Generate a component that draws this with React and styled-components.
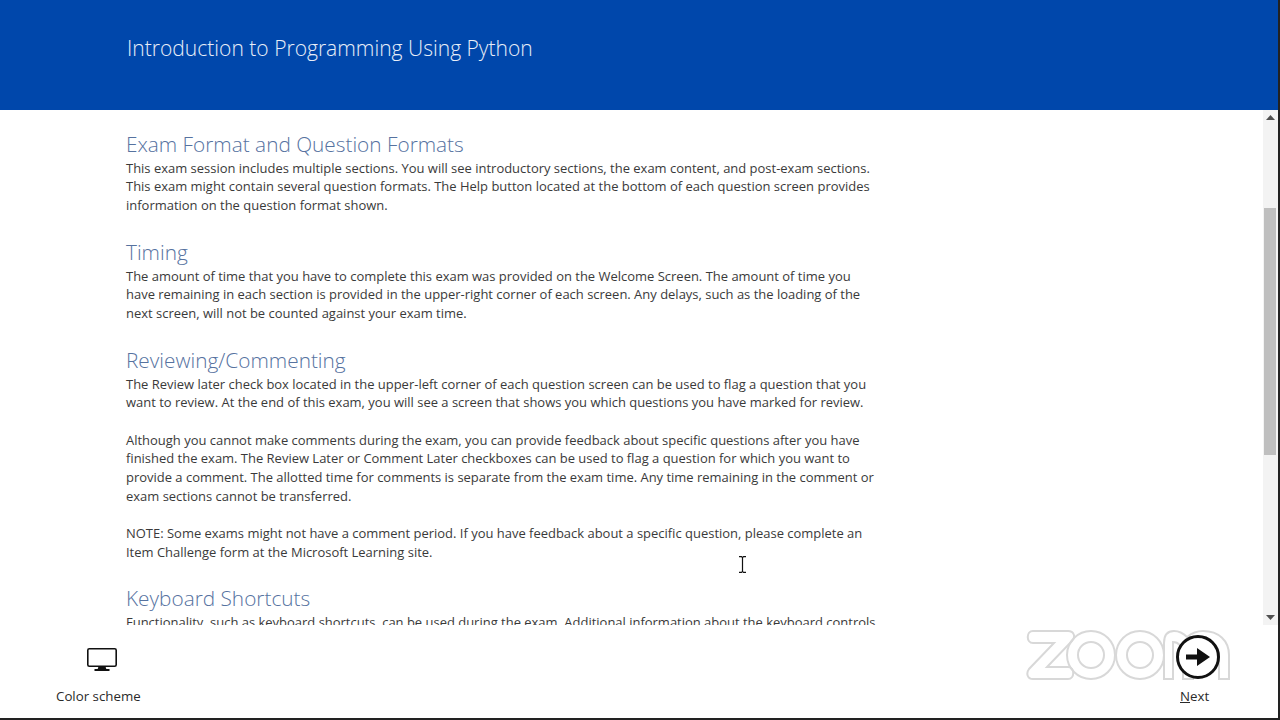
import React from 'react'
import styled, { createGlobalStyle } from 'styled-components'

const Global = createGlobalStyle`
  html, body { margin: 0; padding: 0; background: #fff; overflow: hidden; }
  * { box-sizing: border-box; }
`

const Page = styled.div`
  position: relative;
  width: 1280px;
  height: 720px;
  display: flex;
  flex-direction: column;
  overflow: hidden;
  background: #fff;
  border-right: 2px solid #222;
  border-bottom: 2px solid #222;
  font-family: "Open Sans", "Noto Sans", sans-serif;
`

const Header = styled.header`
  height: 110px;
  flex: none;
  background: #0047ab;
  color: #e8eef8;
  font-size: 21.05px;
  font-weight: 300;
  line-height: 28px;
  padding: 34px 0 0 127px;
`

const Middle = styled.div`
  height: 515px;
  flex: none;
  display: flex;
`

const Content = styled.main`
  flex: 1;
  overflow: hidden;
  padding: 18.6px 0 0 126px;
`

const Column = styled.div`
  width: 760px;
`

const Heading = styled.h2`
  margin: ${p => (p.$first ? '0' : '22px')} 0 0;
  font-size: 20.8px;
  font-weight: 300;
  line-height: 30px;
  color: #56729f;
`

const Para = styled.p`
  margin: ${p => (p.$gap ? '18.67px' : '0')} 0 0;
  font-size: 12.97px;
  line-height: 18.67px;
  color: #3a3a3a;
  white-space: nowrap;
`

const Scrollbar = styled.div`
  width: 15px;
  flex: none;
  display: flex;
  flex-direction: column;
  background: #f3f3f3;
`

const Arrow = styled.div`
  height: 15px;
  flex: none;
  display: flex;
  align-items: center;
  justify-content: center;
  svg { display: block; }
`

const Track = styled.div`
  flex: 1;
  padding-top: 83px;
`

const Thumb = styled.div`
  height: 247px;
  background: #bfbfbf;
  margin: 0 2px 0 1px;
`

const Footer = styled.footer`
  flex: 1;
  display: flex;
  justify-content: space-between;
  padding: 0 58px 0 56px;
`

const FootItem = styled.div`
  display: flex;
  flex-direction: column;
  color: #2a2a2a;
  font-size: 13.3px;
  line-height: 18px;
`

const IconSlot = styled.div`
  position: relative;
  height: 62px;
  padding-top: ${p => p.$top}px;
  padding-left: ${p => p.$left}px;
  svg { display: block; }
`

const Label = styled.span`
  padding-left: ${p => p.$left || 0}px;
`

const Hotkey = styled.span`
  text-decoration: underline;
`

const Watermark = styled.svg`
  position: absolute;
  left: 1026px;
  top: 629px;
`

const Cursor = styled.svg`
  position: absolute;
  left: 738px;
  top: 556px;
`

const sections = [
  { title: 'Exam Format and Question Formats', paras: [[
    'This exam session includes multiple sections. You will see introductory sections, the exam content, and post-exam sections.',
    'This exam might contain several question formats. The Help button located at the bottom of each question screen provides',
    'information on the question format shown.',
  ]] },
  { title: 'Timing', paras: [[
    'The amount of time that you have to complete this exam was provided on the Welcome Screen. The amount of time you',
    'have remaining in each section is provided in the upper-right corner of each screen. Any delays, such as the loading of the',
    'next screen, will not be counted against your exam time.',
  ]] },
  { title: 'Reviewing/Commenting', paras: [[
    'The Review later check box located in the upper-left corner of each question screen can be used to flag a question that you',
    'want to review. At the end of this exam, you will see a screen that shows you which questions you have marked for review.',
  ], [
    'Although you cannot make comments during the exam, you can provide feedback about specific questions after you have',
    'finished the exam. The Review Later or Comment Later checkboxes can be used to flag a question for which you want to',
    'provide a comment. The allotted time for comments is separate from the exam time. Any time remaining in the comment or',
    'exam sections cannot be transferred.',
  ], [
    'NOTE: Some exams might not have a comment period. If you have feedback about a specific question, please complete an',
    'Item Challenge form at the Microsoft Learning site.',
  ]] },
  { title: 'Keyboard Shortcuts', paras: [[
    'Functionality, such as keyboard shortcuts, can be used during the exam. Additional information about the keyboard controls',
  ]] },
]

const App = () => (
  <Page>
    <Global />
    <Header>Introduction to Programming Using Python</Header>
    <Middle>
      <Content>
        <Column>
          {sections.map((s, i) => (
            <section key={s.title}>
              <Heading $first={i === 0}>{s.title}</Heading>
              {s.paras.map((lines, j) => (
                <Para key={j} $gap={j > 0}>
                  {lines.map(l => <React.Fragment key={l}>{l}<br /></React.Fragment>)}
                </Para>
              ))}
            </section>
          ))}
        </Column>
      </Content>
      <Scrollbar>
        <Arrow><svg width="9" height="5"><path d="M0 5 L4.5 0 L9 5Z" fill="#505050" /></svg></Arrow>
        <Track><Thumb /></Track>
        <Arrow><svg width="9" height="5"><path d="M0 0 L4.5 5 L9 0Z" fill="#505050" /></svg></Arrow>
      </Scrollbar>
    </Middle>
    <Watermark width="206" height="52" viewBox="0 0 206 52" fill="none" stroke="#d8d8d8" strokeWidth="2">
      <path d="M7 2h35c6 0 8 6 4 10L21 38h21c7 0 7 12 0 12H7c-6 0-7-6-4-10L28 14H7C0 14 0 2 7 2z" />
      <circle cx="65" cy="26" r="24" />
      <circle cx="65" cy="26" r="13" />
      <circle cx="114" cy="26" r="24" />
      <circle cx="114" cy="26" r="13" />
      <path d="M138 50V14c0-6 2-12 10-12 5 0 9 2 13 6 6-5 11-6 16-6 16 0 26 10 26 24v24h-10V26c0-9-6-13-13-13s-13 4-13 13v24h-10V26c0-9-5-13-10-13v37z" />
    </Watermark>
    <Footer>
      <FootItem>
        <IconSlot $top={23} $left={31}>
          <svg width="30" height="23" viewBox="0 0 30 23">
            <rect x="0.8" y="0.800" width="28.400" height="17.400" rx="1.500" fill="#fff" stroke="#111" strokeWidth="1.600" />
            <path d="M11.500 18.500h7l.8 2.500h-8.600z M7.500 21h15v2h-15z" fill="#111" />
          </svg>
        </IconSlot>
        <Label>Color scheme</Label>
      </FootItem>
      <FootItem>
        <IconSlot $top={10} $left={0}>
          <svg width="44" height="44" viewBox="0 0 44 44">
            <circle cx="22" cy="22" r="20.500" fill="#fff" stroke="#111" strokeWidth="3" />
            <path d="M10 19.500h11V13l13 9-13 9v-6.500H10z" fill="#111" />
          </svg>
        </IconSlot>
        <Label $left={4}><Hotkey>N</Hotkey>ext</Label>
      </FootItem>
    </Footer>
    <Cursor width="9" height="17" viewBox="0 0 9 17" fill="none" stroke="#111" strokeWidth="1.200">
      <path d="M1 .6h2.500l1 1 1-1H8M4.500 1.600v13.800M1 16.400h2.500l1-1 1 1H8" />
    </Cursor>
  </Page>
)

export default App
